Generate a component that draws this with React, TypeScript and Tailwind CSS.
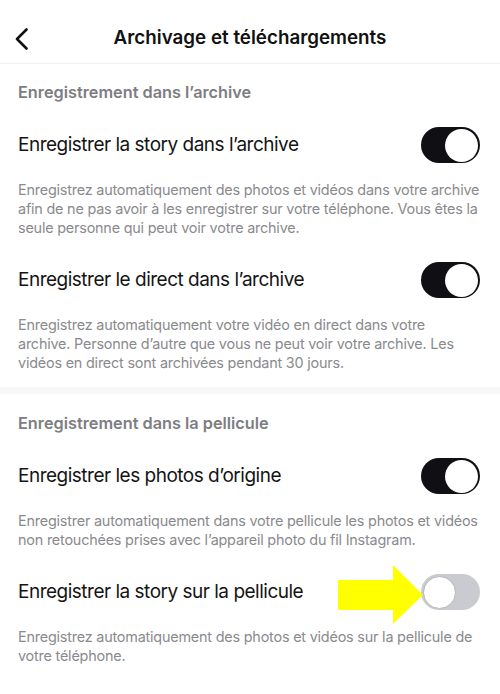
import React from "react";

const FONT = { fontFamily: "Inter, 'Noto Sans', sans-serif" };

function Toggle({ on }: { on: boolean }) {
  return (
    <div
      className={`flex h-[36px] w-[59px] shrink-0 items-center rounded-full p-[2px] ${
        on ? "justify-end bg-[#0f0f14]" : "justify-start bg-[#c9cbd1]"
      }`}
    >
      <div
        className={`h-[33px] w-[33px] rounded-full bg-white ${
          on ? "" : "border border-[#b5b7bd]"
        }`}
      />
    </div>
  );
}

function SettingRow({
  label,
  description,
  on,
  arrow = false,
}: {
  label: string;
  description: string[];
  on: boolean;
  arrow?: boolean;
}) {
  return (
    <div className="relative pt-[24px] pb-[1px]">
      <div className="flex items-center justify-between pl-[18px] pr-[20px]">
        <span className="text-[19px] leading-[24px] tracking-[-0.5px] text-[#141414]">
          {label}
        </span>
        <Toggle on={on} />
      </div>
      <p className="mt-[17px] pl-[18px] pr-[16px] text-[14.4px] leading-[19px] tracking-[-0.2px] text-[#8a8a8e]">
        {description.map((line, i) => (
          <span key={i} className="block whitespace-nowrap">
            {line}
          </span>
        ))}
      </p>
      {arrow && (
        // highlight arrow pointing at the switch
        <svg
          className="absolute left-[338px] top-[15px]"
          width="86"
          height="60"
          viewBox="0 0 86 60"
        >
          <polygon
            points="0,15 55,15 55,0 85,30 55,59 55,45 0,45"
            fill="#ffff00"
          />
        </svg>
      )}
    </div>
  );
}

function SectionTitle({ children }: { children: React.ReactNode }) {
  return (
    <div className="pl-[18px] text-[16.3px] font-semibold leading-[22px] text-[#7d7d82]">
      {children}
    </div>
  );
}

export default function App() {
  return (
    <div className="h-[694px] w-[500px] overflow-hidden bg-white" style={FONT}>
      {/* Top bar */}
      <header className="relative flex h-[64px] items-center justify-center border-b border-[#f0f0f0] pt-[12px]">
        <svg
          className="absolute left-[14px] top-[28px]"
          width="16"
          height="22"
          viewBox="0 0 16 22"
          fill="none"
        >
          <path
            d="M12.5 1.5 L3 11 L12.5 20.5"
            stroke="#111"
            strokeWidth="2.6"
            strokeLinecap="round"
            strokeLinejoin="round"
          />
        </svg>
        <h1 className="text-[18.8px] font-semibold leading-[24px] text-[#111]">
          Archivage et téléchargements
        </h1>
      </header>

      <div className="pt-[17px]">
        <SectionTitle>Enregistrement dans l’archive</SectionTitle>
      </div>
      <SettingRow
        label="Enregistrer la story dans l’archive"
        on
        description={[
          "Enregistrez automatiquement des photos et vidéos dans votre archive",
          "afin de ne pas avoir à les enregistrer sur votre téléphone. Vous êtes la",
          "seule personne qui peut voir votre archive.",
        ]}
      />
      <SettingRow
        label="Enregistrer le direct dans l’archive"
        on
        description={[
          "Enregistrez automatiquement votre vidéo en direct dans votre",
          "archive. Personne d’autre que vous ne peut voir votre archive. Les",
          "vidéos en direct sont archivées pendant 30 jours.",
        ]}
      />

      <div className="mt-[14px] h-[7px] bg-[#f7f7f7]" />

      <div className="pt-[18px]">
        <SectionTitle>Enregistrement dans la pellicule</SectionTitle>
      </div>
      <SettingRow
        label="Enregistrer les photos d’origine"
        on
        description={[
          "Enregistrer automatiquement dans votre pellicule les photos et vidéos",
          "non retouchées prises avec l’appareil photo du fil Instagram.",
        ]}
      />
      <SettingRow
        label="Enregistrer la story sur la pellicule"
        on={false}
        arrow
        description={[
          "Enregistrez automatiquement des photos et vidéos sur la pellicule de",
          "votre téléphone.",
        ]}
      />
    </div>
  );
}
